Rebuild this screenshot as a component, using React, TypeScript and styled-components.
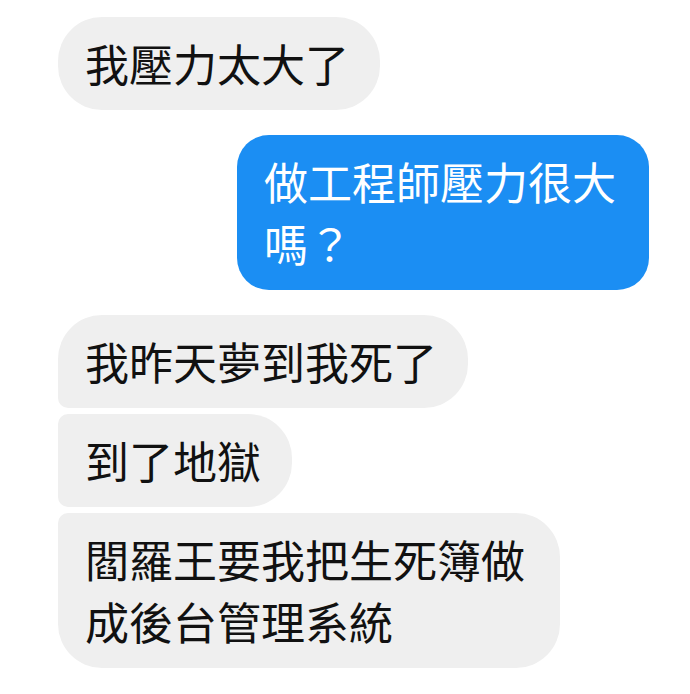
import * as React from 'react';
import styled, { createGlobalStyle } from 'styled-components';

const GlobalStyle = createGlobalStyle`
    html, body {
        margin: 0;
        padding: 0;
        background: #ffffff;
    }
    body {
        font-family: 'Noto Sans CJK TC', 'Noto Sans CJK SC', sans-serif;
    }
`;

const Thread = styled.div`
    display: flex;
    flex-direction: column;
    gap: 25px;
    padding: 17px 41px 20px 58px;
    background: #ffffff;
`;

const Group = styled.div<{ $mine?: boolean }>`
    display: flex;
    flex-direction: column;
    align-items: ${p => (p.$mine ? 'flex-end' : 'flex-start')};
    gap: 6px;
`;

const Bubble = styled.div<{ $mine?: boolean; $first?: boolean; $last?: boolean }>`
    box-sizing: border-box;
    width: fit-content;
    max-width: ${p => (p.$mine ? '412px' : '502px')};
    padding: 15px 31px 16px 27px;
    font-size: 44px;
    line-height: 62px;
    color: ${p => (p.$mine ? '#ffffff' : '#111111')};
    background-color: ${p => (p.$mine ? '#1b8ef3' : '#efefef')};
    border-radius: ${p =>
        p.$mine
            ? '32px'
            : `${p.$first ? 44 : 10}px 44px 44px ${p.$last ? 44 : 10}px`};
`;

const groups = [
    { mine: false, lines: ['我壓力太大了'] },
    { mine: true, lines: ['做工程師壓力很大嗎？'] },
    { mine: false, lines: ['我昨天夢到我死了', '到了地獄', '閻羅王要我把生死簿做成後台管理系統'] },
];

const App: React.FunctionComponent = () => (
    <>
        <GlobalStyle />
        <Thread>
            {groups.map((group, gi) => (
                <Group key={gi} $mine={group.mine}>
                    {group.lines.map((text, i) => (
                        <Bubble
                            key={i}
                            $mine={group.mine}
                            $first={i === 0}
                            $last={i === group.lines.length - 1}
                        >
                            {text}
                        </Bubble>
                    ))}
                </Group>
            ))}
        </Thread>
    </>
);

export default App;
